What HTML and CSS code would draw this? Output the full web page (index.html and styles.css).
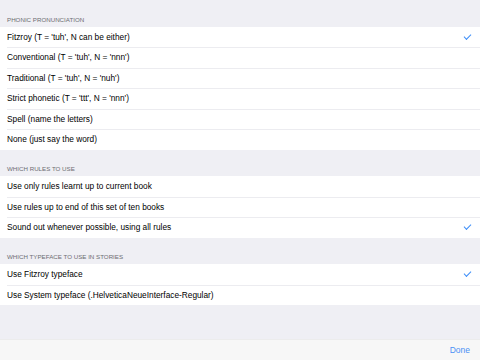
FILE: index.html
```html
<!DOCTYPE html>
<html lang="en">
<head>
    <meta charset="UTF-8">
    <meta name="viewport" content="width=device-width, initial-scale=1.0">
    <title>Settings</title>
    <link rel="stylesheet" href="styles.css">
</head>
<body>
    <div class="screen">
        <div class="table">
            <div class="section-header">PHONIC PRONUNCIATION</div>
            <ul class="group">
                <li class="row checked">Fitzroy (T = 'tuh', N can be either)</li>
                <li class="row">Conventional (T = 'tuh', N = 'nnn')</li>
                <li class="row">Traditional (T = 'tuh', N = 'nuh')</li>
                <li class="row">Strict phonetic (T = 'ttt', N = 'nnn')</li>
                <li class="row">Spell (name the letters)</li>
                <li class="row">None (just say the word)</li>
            </ul>

            <div class="section-header">WHICH RULES TO USE</div>
            <ul class="group">
                <li class="row">Use only rules learnt up to current book</li>
                <li class="row">Use rules up to end of this set of ten books</li>
                <li class="row checked">Sound out whenever possible, using all rules</li>
            </ul>

            <div class="section-header">WHICH TYPEFACE TO USE IN STORIES</div>
            <ul class="group">
                <li class="row checked">Use Fitzroy typeface</li>
                <li class="row">Use System typeface (.HelveticaNeueInterface-Regular)</li>
            </ul>
        </div>

        <div class="toolbar">
            <button class="done">Done</button>
        </div>
    </div>
</body>
</html>
```

FILE: styles.css
```css
* { box-sizing: border-box; }
html, body { margin: 0; padding: 0; }
body { font-family: "Liberation Sans", Arial, sans-serif; background-color: #efeff4; color: #000; }
.screen { width: 480px; height: 360px; display: flex; flex-direction: column; }
.table { flex: 1; }
.section-header { height: 26.5px; padding: 0 7px 4px; display: flex; align-items: flex-end; font-size: 6.2px; color: #6d6d72; }
.group { list-style: none; margin: 0; padding: 0; background-color: #fff; }
.row { height: 20.5px; padding: 0 7px; display: flex; align-items: center; font-size: 8.3px; position: relative; }
.row + .row::before { content: ""; position: absolute; left: 7px; right: 0; top: 0; height: 1px; background-color: #ececf0; }
.checked::after { content: ""; position: absolute; right: 9px; top: 7px; width: 6px; height: 3px; border-left: 1.3px solid #3d8ef8; border-bottom: 1.3px solid #3d8ef8; transform: rotate(-45deg); }
.toolbar { height: 21.5px; background-color: #f7f7f7; border-top: 1px solid #ececec; display: flex; justify-content: flex-end; align-items: center; padding: 0 10px; }
.done { background: none; border: none; padding: 0; font-family: inherit; font-size: 8.5px; color: #4a90f5; }
```
